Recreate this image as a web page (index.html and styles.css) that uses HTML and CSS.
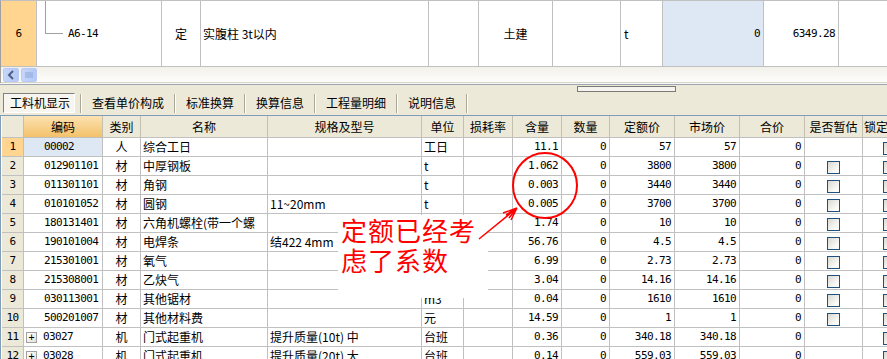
FILE: index.html
```html
<!DOCTYPE html>
<html>
  <head>
    <title>工料机显示</title>
    <link rel="stylesheet" href="styles.css">
  </head>
  <body>
    <div class="page">
      <!-- upper grid: current quota row -->
      <div class="upper">
        <table class="bill">
          <colgroup>
            <col class="b-no"><col class="b-code"><col class="b-type"><col class="b-name"><col class="b-spec">
            <col class="b-major"><col class="b-x"><col class="b-unit"><col class="b-qty"><col class="b-price"><col class="b-rest">
          </colgroup>
          <tr>
            <td class="no sel">6</td>
            <td><div class="tree"><span class="branch"></span><span class="mono">A6-14</span></div></td>
            <td class="c">定</td>
            <td class="txt">实腹柱 3t以内</td>
            <td></td>
            <td class="c">土建</td>
            <td></td>
            <td class="txt unit">t</td>
            <td class="n cur">0</td>
            <td class="n">6349.28</td>
            <td></td>
          </tr>
        </table>
        <div class="hscroll">
          <span class="sb-btn">
            <svg width="8" height="10" viewBox="0 0 8 10"><path d="M6 1 L2 5 L6 9" fill="none" stroke="#4d6185" stroke-width="2"/></svg>
          </span>
          <span class="sb-btn">
            <svg width="8" height="8" viewBox="0 0 8 8"><path d="M1 1V7M3 1V7M5 1V7M7 1V7" stroke="#8ea4d8" stroke-width="1"/></svg>
          </span>
        </div>
      </div>
      <div class="frame"></div>

      <div class="toolbar">
        <div class="splitter"><span class="grip"></span></div>
        <div class="tabs">
          <span class="tab on">工料机显示</span>
          <span class="sep"></span>
          <span class="tab">查看单价构成</span>
          <span class="sep"></span>
          <span class="tab">标准换算</span>
          <span class="sep"></span>
          <span class="tab">换算信息</span>
          <span class="sep"></span>
          <span class="tab">工程量明细</span>
          <span class="sep"></span>
          <span class="tab">说明信息</span>
          <span class="sep"></span>
        </div>
      </div>

      <!-- lower grid: labour / material / machine -->
      <div class="grid">
        <table class="lmm">
          <colgroup>
            <col class="g-no"><col class="g-code"><col class="g-type"><col class="g-name"><col class="g-spec"><col class="g-unit"><col class="g-loss">
            <col class="g-qty"><col class="g-num"><col class="g-price"><col class="g-price"><col class="g-price"><col class="g-est"><col class="g-lock">
          </colgroup>
          <tr class="head">
            <td></td><td class="hot">编码</td><td>类别</td><td>名称</td><td>规格及型号</td><td>单位</td><td>损耗率</td>
            <td>含量</td><td>数量</td><td>定额价</td><td>市场价</td><td>合价</td><td>是否暂估</td><td class="left">锁定含量</td>
          </tr>
          <tr>
            <td class="no sel">1</td><td class="code cur">00002</td><td class="c">人</td><td class="txt">综合工日</td><td></td><td class="txt">工日</td><td></td>
            <td class="n">11.1</td><td class="n">0</td><td class="n">57</td><td class="n">57</td><td class="n">0</td><td></td><td class="lock"><span class="chk"></span></td>
          </tr>
          <tr>
            <td class="no">2</td><td class="code">012901101</td><td class="c">材</td><td class="txt">中厚钢板</td><td></td><td class="txt">t</td><td></td>
            <td class="n">1.062</td><td class="n">0</td><td class="n">3800</td><td class="n">3800</td><td class="n">0</td><td class="c"><span class="chk"></span></td><td class="lock"><span class="chk"></span></td>
          </tr>
          <tr>
            <td class="no">3</td><td class="code">011301101</td><td class="c">材</td><td class="txt">角钢</td><td></td><td class="txt">t</td><td></td>
            <td class="n">0.003</td><td class="n">0</td><td class="n">3440</td><td class="n">3440</td><td class="n">0</td><td class="c"><span class="chk"></span></td><td class="lock"><span class="chk"></span></td>
          </tr>
          <tr>
            <td class="no">4</td><td class="code">010101052</td><td class="c">材</td><td class="txt">圆钢</td><td class="txt">11~20mm</td><td class="txt">t</td><td></td>
            <td class="n">0.005</td><td class="n">0</td><td class="n">3700</td><td class="n">3700</td><td class="n">0</td><td class="c"><span class="chk"></span></td><td class="lock"><span class="chk"></span></td>
          </tr>
          <tr>
            <td class="no">5</td><td class="code">180131401</td><td class="c">材</td><td class="txt">六角机螺栓(带一个螺</td><td></td><td></td><td></td>
            <td class="n">1.74</td><td class="n">0</td><td class="n">10</td><td class="n">10</td><td class="n">0</td><td class="c"><span class="chk"></span></td><td class="lock"><span class="chk"></span></td>
          </tr>
          <tr>
            <td class="no">6</td><td class="code">190101004</td><td class="c">材</td><td class="txt">电焊条</td><td class="txt">结422 4mm</td><td></td><td></td>
            <td class="n">56.76</td><td class="n">0</td><td class="n">4.5</td><td class="n">4.5</td><td class="n">0</td><td class="c"><span class="chk"></span></td><td class="lock"><span class="chk"></span></td>
          </tr>
          <tr>
            <td class="no">7</td><td class="code">215301001</td><td class="c">材</td><td class="txt">氧气</td><td></td><td></td><td></td>
            <td class="n">6.99</td><td class="n">0</td><td class="n">2.73</td><td class="n">2.73</td><td class="n">0</td><td class="c"><span class="chk"></span></td><td class="lock"><span class="chk"></span></td>
          </tr>
          <tr>
            <td class="no">8</td><td class="code">215308001</td><td class="c">材</td><td class="txt">乙炔气</td><td></td><td></td><td></td>
            <td class="n">3.04</td><td class="n">0</td><td class="n">14.16</td><td class="n">14.16</td><td class="n">0</td><td class="c"><span class="chk"></span></td><td class="lock"><span class="chk"></span></td>
          </tr>
          <tr>
            <td class="no">9</td><td class="code">030113001</td><td class="c">材</td><td class="txt">其他锯材</td><td></td><td class="txt">m3</td><td></td>
            <td class="n">0.04</td><td class="n">0</td><td class="n">1610</td><td class="n">1610</td><td class="n">0</td><td class="c"><span class="chk"></span></td><td class="lock"><span class="chk"></span></td>
          </tr>
          <tr>
            <td class="no">10</td><td class="code">500201007</td><td class="c">材</td><td class="txt">其他材料费</td><td></td><td class="txt">元</td><td></td>
            <td class="n">14.59</td><td class="n">0</td><td class="n">1</td><td class="n">1</td><td class="n">0</td><td class="c"><span class="chk"></span></td><td class="lock"><span class="chk"></span></td>
          </tr>
          <tr>
            <td class="no">11</td><td class="code sub"><span class="plus">+</span>03027</td><td class="c">机</td><td class="txt">门式起重机</td><td class="txt">提升质量(10t) 中</td><td class="txt">台班</td><td></td>
            <td class="n">0.36</td><td class="n">0</td><td class="n">340.18</td><td class="n">340.18</td><td class="n">0</td><td></td><td class="lock"><span class="chk"></span></td>
          </tr>
          <tr>
            <td class="no">12</td><td class="code sub"><span class="plus">+</span>03028</td><td class="c">机</td><td class="txt">门式起重机</td><td class="txt">提升质量(20t) 大</td><td class="txt">台班</td><td></td>
            <td class="n">0.14</td><td class="n">0</td><td class="n">559.03</td><td class="n">559.03</td><td class="n">0</td><td></td><td class="lock"><span class="chk"></span></td>
          </tr>
        </table>
      </div>

      <!-- hand-drawn annotation on top of the grid -->
      <div class="note">定额已经考<br>虑了系数</div>
      <svg class="marks" width="887" height="359" viewBox="0 0 887 359">
        <ellipse cx="545" cy="185.5" rx="32" ry="32.5" fill="none" stroke="#f00" stroke-width="2"/>
        <path d="M479 239 L517 208 M517 208 L503 213 M517 208 L506 215 M517 208 L509 218 M517 208 L511 220" fill="none" stroke="#f00" stroke-width="1.5"/>
      </svg>
    </div>
  </body>
</html>
```

FILE: styles.css
```css
body {
  margin: 0;
}

.page {
  position: relative;
  width: 887px;
  height: 359px;
  overflow: hidden;
  background: #ece9d8;
  font: 12px "Noto Sans CJK SC", sans-serif;
  color: #000;
}

table {
  border-collapse: separate;
  border-spacing: 0;
  table-layout: fixed;
  font: inherit;
}

td {
  padding: 0;
  border-right: 1px solid #c0c0c0;
  border-bottom: 1px solid #c0c0c0;
  white-space: nowrap;
  overflow: hidden;
  vertical-align: middle;
}

.mono,
.n,
.no,
.code {
  font-family: "DejaVu Sans Mono", monospace;
  font-size: 11px;
  letter-spacing: -0.6px;
}

.c {
  text-align: center;
}

.n {
  text-align: right;
  padding-right: 3px;
}

.txt {
  padding-left: 2px;
}

.no {
  text-align: center;
  background: #ece9d8;
}

.no.sel {
  background: #ffd58f;
}

.cur {
  background: #dee8f5;
}

/* upper grid */
.upper {
  background: #fff;
  border-top: 1px solid #c0c0c0;
  border-left: 1px solid #a0a0a0;
  overflow: hidden;
}

.bill {
  width: 938px;
}

.b-no { width: 36px; }
.b-code { width: 125px; }
.b-type { width: 39px; }
.b-name { width: 228px; }
.b-spec { width: 50px; }
.b-major { width: 74px; }
.b-x { width: 68px; }
.b-unit { width: 42px; }
.b-qty { width: 101px; }
.b-price { width: 75px; }
.b-rest { width: 100px; }

.bill .unit {
  padding-left: 3px;
}

.tree {
  display: flex;
  height: 65px;
}

.branch {
  width: 17px;
  height: 32px;
  margin-left: 8px;
  border-left: 1px solid #a0a0a0;
  border-bottom: 1px solid #a0a0a0;
}

.tree .mono {
  align-self: center;
  margin-left: 5px;
}

.hscroll {
  display: flex;
  gap: 2px;
  height: 16px;
  padding: 1px 0 0 2px;
  box-sizing: border-box;
  border-bottom: 1px solid #d6d3c8;
  background: linear-gradient(#f2f0e9, #fdfdfb);
}

.sb-btn {
  display: flex;
  align-items: center;
  justify-content: center;
  width: 16px;
  height: 14px;
  box-sizing: border-box;
  border: 1px solid #b7c9f4;
  border-radius: 2px;
  background: linear-gradient(90deg, #c6d6fb, #b4c8f6);
}

.frame {
  border-top: 1px solid #f7f7f3;
  border-bottom: 1px solid #9da5b0;
}

/* tab strip */
.toolbar {
  height: 30px;
}

.splitter {
  height: 8px;
  padding-top: 1px;
  box-sizing: border-box;
}

.grip {
  display: block;
  width: 99px;
  height: 6px;
  margin-left: 577px;
  box-sizing: border-box;
  border: 1px solid #7a7a7a;
  background: #f4f3ee;
}

.tabs {
  display: flex;
  align-items: center;
  height: 20px;
  margin-left: 3px;
}

.tab {
  padding: 0 10px;
  line-height: 18px;
}

.tab.on {
  width: 72px;
  padding: 0 0 0 6px;
  margin-right: 5px;
  box-sizing: border-box;
  border: 1px solid;
  border-color: #808080 #fff #fff #808080;
  background: #f6f5f0;
}

.sep {
  width: 0;
  height: 19px;
  border-left: 1px solid #aca899;
  border-right: 1px solid #fff;
}

/* lower grid */
.grid {
  height: 243px;
  overflow: hidden;
  border-top: 1px solid #7f9db9;
  border-left: 1px solid #7f9db9;
  padding-left: 1px;
  background: #fff;
}

.lmm {
  width: 919px;
}

.g-no { width: 22px; }
.g-code { width: 79px; }
.g-type { width: 38px; }
.g-name { width: 127px; }
.g-spec { width: 154px; }
.g-unit { width: 42px; }
.g-loss { width: 49px; }
.g-qty { width: 49px; }
.g-num { width: 48px; }
.g-price { width: 65px; }
.g-est { width: 58px; }
.g-lock { width: 58px; }

.lmm td {
  height: 18px;
  line-height: 18px;
}

.lmm .head td {
  height: 21px;
  line-height: 21px;
  text-align: center;
  background: #ece9d8;
  border-right-color: #c3c0b0;
}

.lmm .head td.hot {
  background: linear-gradient(#fce2b1, #f3c16b);
}

.lmm .head td.left {
  text-align: left;
  padding-left: 1px;
}

.code {
  padding-left: 20px;
}

.code.sub {
  padding-left: 2px;
}

.plus {
  display: inline-block;
  width: 11px;
  height: 11px;
  margin-right: 6px;
  box-sizing: border-box;
  border: 1px solid #a0a0a0;
  background: linear-gradient(135deg, #fff, #e4e2d8);
  font-size: 10px;
  line-height: 9px;
  letter-spacing: 0;
  text-align: center;
  vertical-align: -1px;
}

.chk {
  display: inline-block;
  width: 13px;
  height: 13px;
  box-sizing: border-box;
  border: 1px solid #1c5180;
  background: linear-gradient(135deg, #d9d8d0, #fbfbf9 75%);
  vertical-align: middle;
}

.lock {
  padding-left: 20px;
}

/* annotation */
.note {
  position: absolute;
  left: 338px;
  top: 215px;
  width: 150px;
  height: 83px;
  padding-left: 3px;
  box-sizing: border-box;
  background: #fff;
  color: #f00;
  font-size: 26px;
  line-height: 30px;
  letter-spacing: 1px;
}

.marks {
  position: absolute;
  left: 0;
  top: 0;
  pointer-events: none;
}
```
